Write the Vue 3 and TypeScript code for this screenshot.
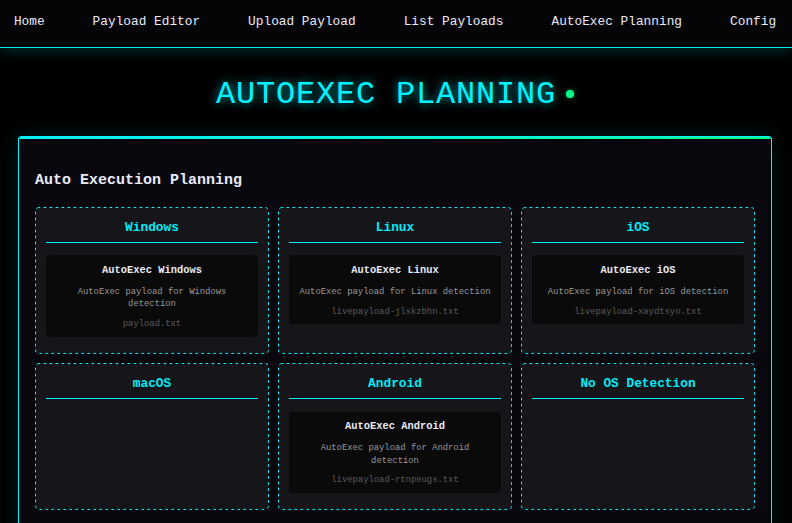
<script setup lang="ts">
interface Payload {
  name: string
  description: string
  file: string
}

interface OsGroup {
  os: string
  payloads: Payload[]
}

const links: string[] = [
  'Home',
  'Payload Editor',
  'Upload Payload',
  'List Payloads',
  'AutoExec Planning',
  'Config',
]

const groups: OsGroup[] = [
  {
    os: 'Windows',
    payloads: [
      { name: 'AutoExec Windows', description: 'AutoExec payload for Windows detection', file: 'payload.txt' },
    ],
  },
  {
    os: 'Linux',
    payloads: [
      { name: 'AutoExec Linux', description: 'AutoExec payload for Linux detection', file: 'livepayload-jlskzbhn.txt' },
    ],
  },
  {
    os: 'iOS',
    payloads: [
      { name: 'AutoExec iOS', description: 'AutoExec payload for iOS detection', file: 'livepayload-xaydtsyo.txt' },
    ],
  },
  { os: 'macOS', payloads: [] },
  {
    os: 'Android',
    payloads: [
      { name: 'AutoExec Android', description: 'AutoExec payload for Android detection', file: 'livepayload-rtnpeugs.txt' },
    ],
  },
  { os: 'No OS Detection', payloads: [] },
]
</script>

<template>
  <div class="page">
    <nav class="nav">
      <a v-for="link in links" :key="link" class="link">{{ link }}</a>
    </nav>
    <header class="header">
      <h1 class="title">AUTOEXEC PLANNING</h1>
      <span class="status"></span>
    </header>
    <main class="panel">
      <h2 class="heading">Auto Execution Planning</h2>
      <div class="grid">
        <section v-for="group in groups" :key="group.os" class="card">
          <svg class="outline" aria-hidden="true"><rect class="dash" /></svg>
          <h3 class="os">{{ group.os }}</h3>
          <article v-for="p in group.payloads" :key="p.file" class="item">
            <div class="name">{{ p.name }}</div>
            <div class="desc">{{ p.description }}</div>
            <div class="file">{{ p.file }}</div>
          </article>
        </section>
      </div>
    </main>
  </div>
</template>

<style>
body {
  background: #000;
  overflow: hidden;
}
</style>

<style scoped>
.page {
  box-sizing: border-box;
  height: 523px;
  overflow: hidden;
  background: #000;
  color: #eaeaf8;
  font-family: "Liberation Mono", monospace;
}
.nav {
  box-sizing: border-box;
  height: 48px;
  display: flex;
  justify-content: center;
  gap: 48px;
  padding: 13px 2px 0 0;
  background: #050508;
  border-bottom: 1px solid #00f3ff;
  box-shadow: 0 0 15px rgba(0, 243, 255, 0.27);
}
.link {
  font-size: 12.8px;
  line-height: 18px;
  white-space: nowrap;
}
.header {
  display: flex;
  justify-content: center;
  align-items: center;
  height: 36px;
  padding: 28px 2px 24px 0;
}
.title {
  margin: 0;
  font-size: 32px;
  font-weight: 400;
  line-height: 36px;
  padding-top: 2px;
  letter-spacing: 0.8px;
  color: #00f3ff;
  text-shadow: 0 0 10px rgba(0, 243, 255, 0.7);
}
.status {
  width: 8px;
  height: 8px;
  margin: 0 0 0 10px;
  border-radius: 50%;
  background: #00ff88;
  box-shadow: 0 0 5px rgba(0, 255, 136, 0.5);
}
.panel {
  box-sizing: border-box;
  margin: 0 20px 0 18px;
  min-height: 420px;
  padding: 33px 16px 16px;
  border: 1px solid #00f3ff;
  border-radius: 3px;
  background: linear-gradient(90deg, #00f3ff, #00ff88) top / 100% 2px no-repeat padding-box, #08080e;
  box-shadow: 0 0 20px rgba(0, 243, 255, 0.12);
}
.heading {
  margin: 0 0 16px;
  font-size: 15px;
  line-height: 21px;
  font-weight: 700;
}
.grid {
  display: grid;
  grid-template-columns: repeat(3, 1fr);
  gap: 9.3px 9px;
}
.card {
  position: relative;
  padding: 10.6px 11px;
  border-radius: 4px;
  background: #15151a;
  text-align: center;
}
.outline {
  position: absolute;
  inset: 0;
  width: 100%;
  height: 100%;
  overflow: visible;
}
.dash {
  x: 0.5px;
  y: 0.5px;
  width: calc(100% - 1px);
  height: calc(100% - 1px);
  rx: 3.5px;
  fill: none;
  stroke: #00f3ff;
  stroke-width: 1px;
  stroke-dasharray: 2.6 3.4;
  stroke-dashoffset: 1.4;
}
.os {
  margin: 0 0 12.3px;
  padding-bottom: 5.4px;
  font-size: 12.8px;
  line-height: 19px;
  color: #00ebf7;
  border-bottom: 1px solid #00f3ff;
}
.item {
  margin-bottom: 6.4px;
  padding: 7.6px 8px 6.3px;
  border-radius: 4px;
  background: #0a0a0b;
}
.name {
  margin-bottom: 8.6px;
  font-size: 10.4px;
  line-height: 14.5px;
  font-weight: 700;
}
.desc {
  margin-bottom: 7.2px;
  font-size: 8.85px;
  line-height: 12.5px;
  color: #999;
}
.file {
  font-size: 8.85px;
  line-height: 12.5px;
  color: #5a5a5a;
}
</style>
